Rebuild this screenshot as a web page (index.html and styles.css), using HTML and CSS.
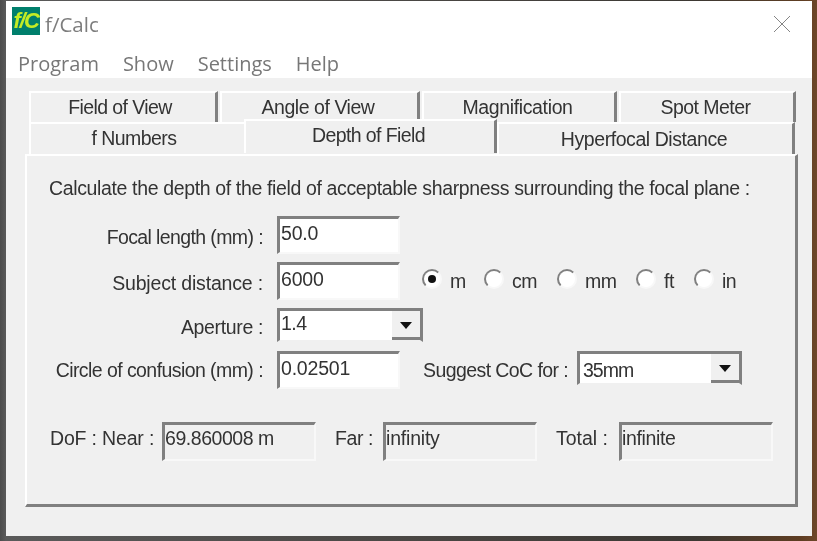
FILE: index.html
```html
<!DOCTYPE html>
<html lang="en">
<head>
<meta charset="utf-8">
<title>f/Calc</title>
<link rel="stylesheet" href="styles.css">
</head>
<body>
<main class="window">
  <header class="chrome">
    <div class="titlebar">
      <span class="logo">f/C</span>
      <span class="title">f/Calc</span>
      <svg class="close" viewBox="0 0 16 16" aria-hidden="true"><path d="M0 0L16 16M16 0L0 16"/></svg>
    </div>
    <nav class="menu">
      <span class="m1">Program</span><span class="m2">Show</span><span class="m3">Settings</span><span>Help</span>
    </nav>
  </header>
  <section class="client">
    <div class="tabrow back">
      <div class="tab t1">Field of View</div>
      <div class="tab t2">Angle of View</div>
      <div class="tab t3">Magnification</div>
      <div class="tab t4">Spot Meter</div>
    </div>
    <div class="tabrow front">
      <div class="tab t5">f Numbers</div>
      <div class="tab active">Depth of Field</div>
      <div class="tab t7">Hyperfocal Distance</div>
    </div>
    <div class="panel">
      <p class="intro">Calculate the depth of the field of acceptable sharpness surrounding the focal plane :</p>
      <div class="row r1">
        <label class="lbl">Focal length (mm) :</label>
        <div class="field">50.0</div>
      </div>
      <div class="row r2">
        <label class="lbl">Subject distance :</label>
        <div class="field">6000</div>
        <div class="radios">
          <span class="radio on w-m"><i></i>m</span>
          <span class="radio w-cm"><i></i>cm</span>
          <span class="radio w-mm"><i></i>mm</span>
          <span class="radio w-ft"><i></i>ft</span>
          <span class="radio"><i></i>in</span>
        </div>
      </div>
      <div class="row r3">
        <label class="lbl">Aperture :</label>
        <div class="combo c1"><span>1.4</span><b class="arrow"></b></div>
      </div>
      <div class="row r4">
        <label class="lbl">Circle of confusion (mm) :</label>
        <div class="field">0.02501</div>
        <label class="suggest">Suggest CoC for :</label>
        <div class="combo c2"><span>35mm</span><b class="arrow"></b></div>
      </div>
      <div class="results">
        <span class="res-l l-near">DoF : Near :</span>
        <div class="out o1">69.860008 m</div>
        <span class="res-l l-far">Far :</span>
        <div class="out o2">infinity</div>
        <span class="res-l l-total">Total :</span>
        <div class="out o3">infinite</div>
      </div>
    </div>
  </section>
</main>
</body>
</html>
```
FILE: styles.css
```css
* { box-sizing: border-box; }
html, body { height: 100%; }
body {
  margin: 0;
  overflow: hidden;
  background:
    linear-gradient(90deg, #4c4c4c 0, #5a5a5a 6px, #4a4744 50%, #3c3833 85%, #5e3d22 98%, #6e4729 100%);
  font-family: "Liberation Sans", Arial, sans-serif;
  font-size: 19.5px;
  color: #333;
}
.window {
  position: absolute;
  left: 6px;
  top: 1px;
  width: 806px;
  height: 535px;
  display: flex;
  flex-direction: column;
  background: #f0f0f0;
  filter: blur(0.4px);
}
.chrome { height: 77px; background: #fff; flex: none; }
.titlebar { height: 46px; display: flex; align-items: center; padding: 3px 22px 0 6px; }
.logo {
  width: 28px; height: 28px;
  background: #007f6c;
  color: #c4ec24;
  font: italic bold 22px/28px "Liberation Sans", sans-serif;
  text-align: center;
  letter-spacing: -1.5px;
  margin-top: -10px;
}
.title {
  margin: 2px 0 0 5px;
  font: 20.5px "Open Sans", sans-serif;
  color: #7d7d7d;
  flex: 1;
  position: relative;
  top: -3px;
}
.close { width: 16px; height: 16px; margin-top: -4px; }
.close path { stroke: #777; stroke-width: 0.9; fill: none; }
.menu { display: flex; padding: 1px 0 0 12px; font: 20px/32px "Open Sans", sans-serif; color: #777; }
.m1, .m2, .m3 { margin-right: 24px; }

.client { flex: 1; padding: 13px 14px 29px 19px; display: flex; flex-direction: column; }
.tabrow { display: flex; flex: none; }
.back { height: 31px; padding-left: 4px; gap: 2px; }
.front { height: 32px; padding-left: 4px; position: relative; }
.tab {
  flex: none;
  border-top: 2px solid #fff;
  border-left: 2px solid #fff;
  border-right: 3px solid #808080;
  text-align: center;
  padding-right: 3px;
  line-height: 29px;
  background: #f0f0f0;
  white-space: nowrap;
}
.t1 { width: 189px; padding-right: 6px; letter-spacing: -0.58px; }
.t2 { width: 200px; letter-spacing: -0.46px; }
.t3 { width: 195px; letter-spacing: -0.36px; }
.t4 { width: 177px; letter-spacing: -0.53px; }
.t5 { width: 215px; padding-right: 7px; border-right: 0; letter-spacing: -0.55px; }
.t7 { width: 298px; line-height: 30px; letter-spacing: -0.43px; }
.front .active {
  width: 253px;
  height: 34px;
  margin-top: -3px;
  position: relative;
  z-index: 1;
  line-height: 28px;
  letter-spacing: -0.6px;
}
.panel {
  flex: 1;
  border-top: 2px solid #fff;
  border-left: 2px solid #fff;
  border-right: 3px solid #808080;
  border-bottom: 3px solid #808080;
  padding: 21px 0 0 22px;
}
.intro { margin: 0 0 17px; line-height: 22px; letter-spacing: -0.36px; white-space: nowrap; }
.row { display: flex; align-items: center; margin-left: -22px; }
.r1 { height: 38px; margin-bottom: 8px; }
.r2 { height: 38px; margin-bottom: 8px; }
.r3 { height: 34px; margin-bottom: 9px; }
.r4 { height: 38px; align-items: flex-start; }
.r1 .lbl { letter-spacing: -0.61px; padding-top: 4px; }
.r2 .lbl { letter-spacing: -0.17px; padding-top: 4px; }
.r3 .lbl { letter-spacing: -0.36px; padding-top: 4px; }
.r4 .lbl { letter-spacing: -0.57px; line-height: 38px; }
.lbl { width: 236px; flex: none; text-align: right; margin-right: 14px; white-space: nowrap; }
.field {
  width: 123px; height: 38px;
  flex: none;
  background: #fff;
  border-top: 3px solid #808080;
  border-left: 3px solid #808080;
  border-right: 2px solid #f8f8f8;
  border-bottom: 2px solid #f8f8f8;
  padding: 3px 0 0 1px;
  line-height: 22px;
  letter-spacing: -0.2px;
}
.radios { display: flex; margin-left: 22px; align-items: center; }
.radio { display: flex; align-items: center; letter-spacing: -0.5px; }
.radio i {
  width: 20px; height: 20px;
  border-radius: 50%;
  background: #fff;
  border: 2px solid;
  border-color: #808080 #f8f8f8 #f8f8f8 #808080;
  margin-right: 8px;
  position: relative;
  top: -2px;
}
.radio.on i::after {
  content: "";
  position: absolute;
  left: 4px; top: 4px;
  width: 8px; height: 8px;
  border-radius: 50%;
  background: #111;
}
.w-m { width: 62px; }
.w-cm { width: 73px; }
.w-mm { width: 79px; }
.w-ft { width: 58px; }
.combo {
  display: flex;
  flex: none;
  align-items: center;
  justify-content: space-between;
  height: 34px;
  background: #fff;
  border-top: 3px solid #808080;
  border-left: 3px solid #808080;
  border-right: 3px solid #808080;
  border-bottom: 2px solid #f0f0f0;
  padding-left: 1px;
}
.c1 { width: 146px; letter-spacing: -0.5px; }
.c1 span { padding-bottom: 4px; }
.c2 { width: 165px; padding-left: 3px; letter-spacing: -1px; }
.c2 span { padding-top: 3px; }
.arrow {
  width: 28px; height: 100%;
  background: #f0f0f0;
  border-bottom: 3px solid #808080;
  position: relative;
  flex: none;
}
.arrow::after {
  content: "";
  position: absolute;
  left: 8px; top: 11px;
  border: 6px solid transparent;
  border-top: 7px solid #111;
  border-bottom: 0;
}
.suggest { margin-left: 23px; margin-right: 9px; letter-spacing: -0.58px; white-space: nowrap; width: 145px; line-height: 38px; }
.results { display: flex; align-items: center; margin: 32px 0 0 -22px; height: 40px; }
.res-l { flex: none; white-space: nowrap; padding-bottom: 6px; }
.l-near { width: 135px; padding-left: 23px; letter-spacing: -0.17px; }
.l-far { width: 67px; padding-left: 19px; letter-spacing: -0.4px; }
.l-total { width: 82px; padding-left: 19px; }
.out {
  width: 154px; height: 39px;
  flex: none;
  border-top: 3px solid #808080;
  border-left: 3px solid #808080;
  border-right: 2px solid #f8f8f8;
  border-bottom: 2px solid #f8f8f8;
  padding-top: 2px;
  line-height: 22px;
}
.o1 { letter-spacing: -0.45px; }
.o2 { letter-spacing: -0.2px; }
.o3 { letter-spacing: -0.35px; }
```
